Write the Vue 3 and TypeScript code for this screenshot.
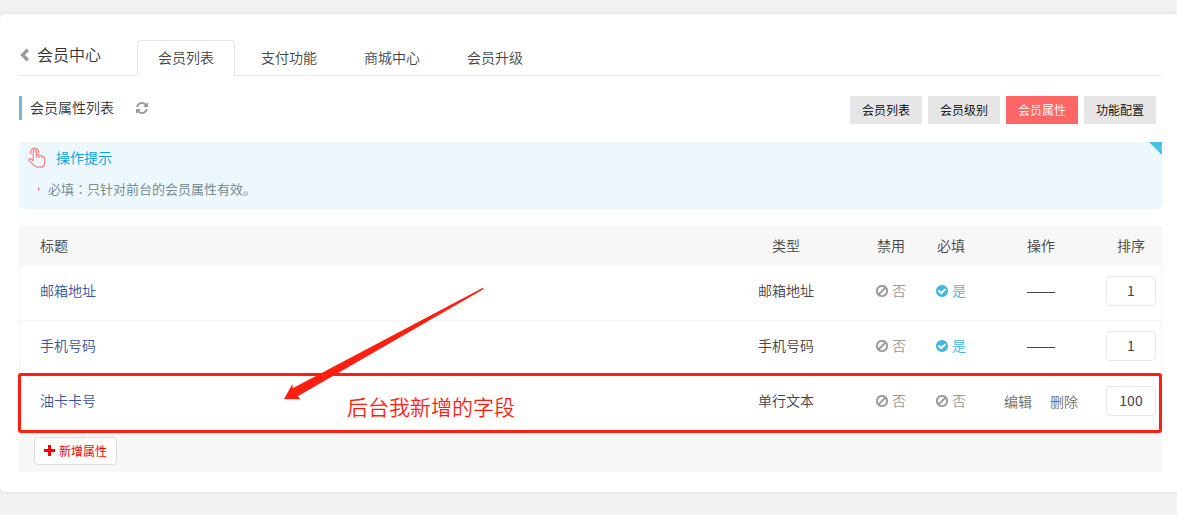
<script setup lang="ts">
import { ref } from 'vue'

interface Attribute {
  title: string
  type: string
  disabled: boolean
  required: boolean
  custom: boolean
  sort: number
}

const tabs: string[] = ['会员列表', '支付功能', '商城中心', '会员升级']
const activeTab = ref('会员列表')

const actions: string[] = ['会员列表', '会员级别', '会员属性', '功能配置']
const activeAction = ref('会员属性')

const attributes = ref<Attribute[]>([
  { title: '邮箱地址', type: '邮箱地址', disabled: false, required: true, custom: false, sort: 1 },
  { title: '手机号码', type: '手机号码', disabled: false, required: true, custom: false, sort: 1 },
  { title: '油卡卡号', type: '单行文本', disabled: false, required: false, custom: true, sort: 100 },
])

const banPath =
  'M1440 893q0-161-87-295l-754 753q137 89 297 89 111 0 211.5-43.5t173.5-116.5 116-174.5 43-212.5zm-999 299l755-754q-135-91-300-91-148 0-273 73t-198 199-73 274q0 162 89 299zm1223-299q0 157-61 300t-163.5 246-245 164-298.5 61-298.5-61-245-164-163.5-246-61-300 61-299.5 163.5-245.5 245-164 298.5-61 298.5 61 245 164 163.5 245.5 61 299.5z'
const checkPath =
  'M1412 734q0-28-18-46l-91-90q-19-19-45-19t-45 19l-408 407-226-226q-19-19-45-19t-45 19l-91 90q-18 18-18 46 0 27 18 45l362 362q19 19 45 19 27 0 46-19l543-543q18-18 18-45zm252 162q0 209-103 385.5t-279.5 279.5-385.5 103-385.5-103-279.5-279.5-103-385.5 103-385.5 279.5-279.5 385.5-103 385.5 103 279.5 279.5 103 385.5z'
</script>

<template>
  <main class="panel">
    <header class="topbar">
      <a class="back" href="#" aria-label="返回">
        <svg width="9" height="14" viewBox="0 0 9 14"><path d="M6.6 0.6 9 3 4.9 7 9 11 6.6 13.4 0.2 7z" /></svg>
      </a>
      <h1 class="title">会员中心</h1>
      <nav class="tabs">
        <a
          v-for="tab in tabs"
          :key="tab"
          href="#"
          class="tab"
          :class="{ active: tab === activeTab }"
          @click.prevent="activeTab = tab"
        >{{ tab }}</a>
      </nav>
    </header>

    <section class="subbar">
      <h2 class="subtitle">会员属性列表</h2>
      <button class="refresh" type="button" aria-label="刷新">
        <svg width="12" height="12" viewBox="128 128 1536 1536"><path d="M1639 1056q0 5-1 7-64 268-268 434.5t-478 166.5q-146 0-282.5-55t-243.5-157l-129 129q-19 19-45 19t-45-19-19-45v-448q0-26 19-45t45-19h448q26 0 45 19t19 45-19 45l-137 137q71 66 161 102t187 36q134 0 250-65t186-179q11-17 53-117 8-23 30-23h192q13 0 22.5 9.5t9.5 22.5zm25-800v448q0 26-19 45t-45 19h-448q-26 0-45-19t-19-45 19-45l138-138q-148-137-349-137-134 0-250 65t-186 179q-11 17-53 117-8 23-30 23h-199q-13 0-22.5-9.5t-9.5-22.5v-7q65-268 270-434.5t480-166.5q146 0 284 55.5t245 156.5l130-129q19-19 45-19t45 19 19 45z" /></svg>
      </button>
      <div class="actions">
        <button
          v-for="action in actions"
          :key="action"
          type="button"
          class="action"
          :class="{ active: action === activeAction }"
          @click="activeAction = action"
        >{{ action }}</button>
      </div>
    </section>

    <aside class="tips">
      <div class="tips-head">
        <svg class="hand" width="18" height="21" viewBox="0 0 18 21">
          <path d="M5.200 14V4.400a1.600 1.600 0 0 1 3.200 0V10.500 M8.400 7.600c1.700-.5 2.700.1 2.700 1.500v1.800 M11.100 8.500c1.700-.5 2.700.1 2.700 1.600v1.500 M13.800 9.700c1.800-.4 2.900.5 2.900 2v3.500c0 3.200-1.900 5-4.700 5h-1.800c-1.900 0-3.200-.7-4.400-2L1.200 13.600c-.9-1.200.6-2.500 1.900-1.600l2.100 1.700 M3.200 7.200A4 4 0 1 1 10.500 5.800" />
        </svg>
        <h3 class="tips-title">操作提示</h3>
      </div>
      <ul class="tips-list">
        <li><span>必填<span class="colon">：</span>只针对前台的会员属性有效。</span></li>
      </ul>
      <svg class="fold" width="13" height="13" viewBox="0 0 13 13"><path d="M0 0H13V13z" /><path class="fold-mark" d="M12 5h1v1h-1z" /></svg>
    </aside>

    <div class="table-wrap">
      <table class="grid">
        <colgroup>
          <col />
          <col class="w-type" />
          <col class="w-flag" />
          <col class="w-flag" />
          <col class="w-ops" />
          <col class="w-sort" />
        </colgroup>
        <thead>
          <tr>
            <th class="name" scope="col">标题</th>
            <th scope="col">类型</th>
            <th scope="col">禁用</th>
            <th scope="col">必填</th>
            <th scope="col">操作</th>
            <th scope="col">排序</th>
          </tr>
        </thead>
        <tbody>
          <tr v-for="row in attributes" :key="row.title">
            <td class="name"><a href="#">{{ row.title }}</a></td>
            <td>{{ row.type }}</td>
            <td v-for="(flag, i) in [row.disabled, row.required]" :key="i">
              <span class="flag" :class="{ on: flag }">
                <svg width="12" height="12" viewBox="128 128 1536 1536"><path :d="flag ? checkPath : banPath" /></svg>
                {{ flag ? '是' : '否' }}
              </span>
            </td>
            <td>
              <span v-if="row.custom" class="ops"><a href="#">编辑</a><a href="#">删除</a></span>
              <span v-else class="none">——</span>
            </td>
            <td><input v-model="row.sort" class="sort" type="text" :aria-label="row.title + '排序'" /></td>
          </tr>
        </tbody>
      </table>
      <footer class="foot">
        <button class="add" type="button">
          <svg width="11" height="11" viewBox="0 0 11 11"><path d="M4 0H7V4H11V7H7V11H4V7H0V4H4z" /></svg>
          新增属性
        </button>
      </footer>

      <div class="mark-box"></div>
      <svg class="mark-arrow" width="202" height="114" viewBox="0 0 202 114">
        <path d="M1 112 9.300 97.300 9.700 101.300 199.500 1 200.800 2 14.700 109.300 17.800 112.300z" />
      </svg>
      <p class="mark-text">后台我新增的字段</p>
    </div>
  </main>
</template>

<style>
body {
  margin: 0;
  background: #f2f2f2;
}
</style>

<style scoped>
.panel {
  box-sizing: border-box;
  margin: 14px 0 23px;
  padding: 26px 15px 20px 19px;
  background: #fff;
  border-radius: 5px 0 0 5px;
  box-shadow: 0 0 4px rgba(0, 0, 0, 0.1);
  font: 350 14px/20px "Noto Sans CJK SC", sans-serif;
  color: #444;
}

a {
  color: inherit;
  text-decoration: none;
}

h1,
h2,
h3,
p,
ul {
  margin: 0;
  padding: 0;
  font-weight: inherit;
}

button,
input {
  font-family: inherit;
  font-weight: inherit;
}

svg {
  display: block;
  fill: currentColor;
}

.topbar {
  display: flex;
  height: 35px;
  border-bottom: 1px solid #ebebeb;
}

.back {
  width: 18px;
  padding: 8px 0 0 1px;
  box-sizing: border-box;
  color: #999;
}

.title {
  width: 100px;
  font-size: 16px;
  line-height: 28px;
  color: #333;
}

.tabs {
  display: flex;
  gap: 5px;
}

.tab {
  box-sizing: border-box;
  width: 98px;
  height: 36px;
  border: 1px solid transparent;
  border-radius: 4px 4px 0 0;
  line-height: 32px;
  text-align: center;
}

.tab.active {
  border-color: #e5e5e5;
  border-bottom-color: #fff;
  background: #fff;
}

.subbar {
  display: flex;
  align-items: flex-start;
  margin-top: 20px;
  height: 28px;
}

.subtitle {
  height: 24px;
  padding-left: 8px;
  border-left: 3px solid #7fb0e0;
  font-size: 14px;
  line-height: 22px;
  color: #333;
}

.refresh {
  margin: 6px 0 0 22px;
  padding: 0;
  border: 0;
  background: none;
  color: #999;
}

.actions {
  display: flex;
  gap: 6px;
  margin: 0 6px 0 auto;
}

.action {
  padding: 0 12px;
  border: 0;
  height: 28px;
  background: #e6e6e6;
  color: #000;
  font-size: 12px;
  line-height: 28px;
}

.action.active {
  background: #f66;
  color: #fff;
}

.tips {
  position: relative;
  box-sizing: border-box;
  margin-top: 18px;
  padding: 5px 8px 10px;
  background: #edf8fe;
  border-radius: 5px 0 5px 5px;
}

.tips-head {
  display: flex;
  gap: 10px;
  height: 21px;
}

.hand {
  margin-left: 1px;
  fill: none;
  stroke: #f88080;
  stroke-width: 1.2;
}

.tips-title {
  font-size: 14px;
  line-height: 20px;
  color: #00a0dc;
}

.tips-list {
  margin-top: 11px;
  list-style: none;
  font-size: 13px;
  color: #6c8186;
}

.tips-list li {
  display: flex;
  align-items: center;
  gap: 8px;
  padding-left: 11px;
}

.tips-list li::before {
  content: "";
  border: 2px solid transparent;
  border-left-color: #f66;
  border-right-width: 0;
}

.colon {
  font-family: "Noto Sans CJK TC", sans-serif;
}

.fold {
  position: absolute;
  top: 0;
  right: 0;
  color: #45c0e2;
}

.fold-mark {
  fill: #fff;
}

.table-wrap {
  position: relative;
  margin-top: 17px;
}

.grid {
  width: 100%;
  border-collapse: separate;
  border-spacing: 0;
  border: solid #f5f5f5;
  border-width: 0 1px;
  table-layout: fixed;
}

.w-type {
  width: 150px;
}

.w-flag,
.w-sort {
  width: 60px;
}

.w-ops {
  width: 120px;
}

th,
td {
  padding: 0;
  text-align: center;
  font-weight: inherit;
}

th {
  height: 38px;
  padding-bottom: 2px;
  background: #f7f7f7;
}

td {
  height: 30px;
  padding: 10px 0 14px;
  border-bottom: 1px solid #f5f5f5;
  line-height: 28px;
  vertical-align: top;
}

.name {
  padding-left: 20px;
  text-align: left;
}

td.name {
  color: #36559a;
}

.flag {
  display: flex;
  align-items: center;
  justify-content: center;
  gap: 4px;
  color: #999;
}

.flag svg {
  margin-top: 2px;
  stroke: currentColor;
  stroke-width: 40;
}

.flag.on {
  color: #3fb8e0;
}

.flag.on svg {
  stroke: none;
}

.ops {
  display: flex;
  justify-content: center;
  gap: 18px;
  line-height: 30px;
  color: #6c6c6c;
}

.none {
  font-family: "Liberation Sans", sans-serif;
}

.sort {
  display: block;
  box-sizing: border-box;
  width: 50px;
  height: 30px;
  margin: 0 auto;
  padding: 0 0 2px;
  border: 1px solid #e8e8e8;
  border-radius: 4px;
  background: #fff;
  color: #444;
  font-size: 14px;
  font-weight: 400;
  text-align: center;
}

.foot {
  padding: 6px 15px 7px;
  background: #f7f7f7;
}

.add {
  display: flex;
  align-items: center;
  gap: 4px;
  height: 28px;
  padding: 0 9px 2px;
  border: 1px solid #ddd;
  border-radius: 4px;
  background: #fff;
  color: #f00;
  font-size: 12px;
  font-weight: 400;
}

.mark-box {
  position: absolute;
  top: 147px;
  right: 0;
  left: -1px;
  box-sizing: border-box;
  height: 60px;
  border: 3px solid #ff1e10;
  border-radius: 3px;
  pointer-events: none;
}

.mark-arrow {
  position: absolute;
  top: 61px;
  left: 264px;
  color: #ff1e10;
  pointer-events: none;
}

.mark-text {
  position: absolute;
  top: 165px;
  left: 328px;
  font-size: 21px;
  line-height: 30px;
  color: #ff1e10;
}
</style>
